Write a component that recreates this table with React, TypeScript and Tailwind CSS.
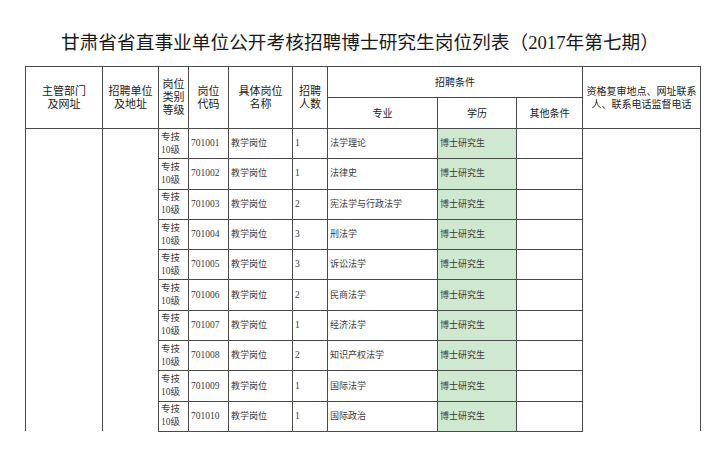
const rows = [
  { code: "701001", num: "1", major: "法学理论" },
  { code: "701002", num: "1", major: "法律史" },
  { code: "701003", num: "2", major: "宪法学与行政法学" },
  { code: "701004", num: "3", major: "刑法学" },
  { code: "701005", num: "3", major: "诉讼法学" },
  { code: "701006", num: "2", major: "民商法学" },
  { code: "701007", num: "1", major: "经济法学" },
  { code: "701008", num: "2", major: "知识产权法学" },
  { code: "701009", num: "1", major: "国际法学" },
  { code: "701010", num: "1", major: "国际政治" },
]

const cjk = { fontFamily: '"Liberation Serif", "Noto Sans CJK SC", serif' }

export default function App() {
  // base cell styles, font size added per cell
  const th = "border border-[#4a4a4a] text-center align-middle font-normal leading-[13px] text-[#222]"
  const td = "border border-[#4a4a4a] align-middle leading-[13px] text-[#3a3a3a] pl-[2px]"

  return (
    <div className="w-[720px] h-[461px] bg-white overflow-hidden" style={cjk}>
      <h1 className="pt-[32px] h-[66px] text-center text-[18.7px] leading-[22px] text-[#1a1a1a]">
        甘肃省省直事业单位公开考核招聘博士研究生岗位列表（2017年第七期）
      </h1>
      <table className="ml-[25px] w-[675px] table-fixed border-collapse">
        <colgroup>
          <col className="w-[77px]" />
          <col className="w-[56px]" />
          <col className="w-[30px]" />
          <col className="w-[40px]" />
          <col className="w-[64px]" />
          <col className="w-[35px]" />
          <col className="w-[110px]" />
          <col className="w-[79px]" />
          <col className="w-[66px]" />
          <col className="w-[118px]" />
        </colgroup>
        <thead>
          <tr className="h-[31px]">
            <th rowSpan={2} className={th + " text-[11px]"}>主管部门<br />及网址</th>
            <th rowSpan={2} className={th + " text-[11px]"}>招聘单位<br />及地址</th>
            <th rowSpan={2} className={th + " text-[11px]"}>岗位<br />类别<br />等级</th>
            <th rowSpan={2} className={th + " text-[11px]"}>岗位<br />代码</th>
            <th rowSpan={2} className={th + " text-[11px]"}>具体岗位<br />名称</th>
            <th rowSpan={2} className={th + " text-[11px]"}>招聘<br />人数</th>
            <th colSpan={3} className={th + " text-[10px]"}>招聘条件</th>
            <th rowSpan={2} className={th + " text-[10px] whitespace-nowrap"}>
              资格复审地点、网址联系<br />人、联系电话监督电话
            </th>
          </tr>
          <tr className="h-[31px]">
            <th className={th + " text-[10px]"}>专业</th>
            <th className={th + " text-[10px]"}>学历</th>
            <th className={th + " text-[10px]"}>其他条件</th>
          </tr>
        </thead>
        <tbody>
          {rows.map((r, i) => (
            <tr key={r.code} className="h-[30.3px]">
              {i === 0 && (
                <>
                  <td rowSpan={10} className="border-x border-[#4a4a4a]" />
                  <td rowSpan={10} className="border-x border-[#4a4a4a]" />
                </>
              )}
              <td className={td + " text-[9.5px]"}>专技<br />10级</td>
              <td className={td + " text-[9.5px]"}>{r.code}</td>
              <td className={td + " text-[9px]"}>教学岗位</td>
              <td className={td + " text-[9.5px]"}>{r.num}</td>
              <td className={td + " text-[9px]"}>{r.major}</td>
              <td className={td + " text-[9px] bg-[#cfe9d1]"}>博士研究生</td>
              <td className={td}></td>
              {i === 0 && <td rowSpan={10} className="border-x border-[#4a4a4a]" />}
            </tr>
          ))}
        </tbody>
      </table>
    </div>
  )
}
